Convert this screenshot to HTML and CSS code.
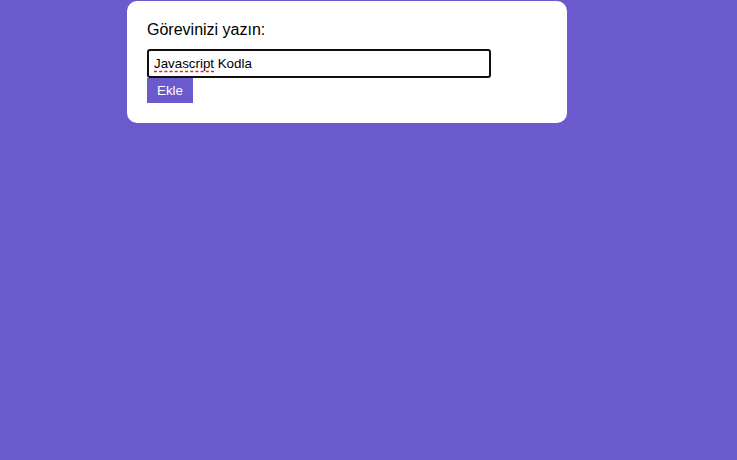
FILE: index.html
```html
<!DOCTYPE html>
<html lang="tr">
<head>
<meta charset="utf-8">
<title>Görevler</title>
<link rel="stylesheet" href="styles.css">
</head>
<body>
<div class="card">
  <label class="label" for="task">Görevinizi yazın:</label>
  <div class="field" id="task"><span class="misspelled">Javascript</span> Kodla</div>
  <button class="add-btn" type="button">Ekle</button>
</div>
</body>
</html>
```
FILE: styles.css
```css
html, body {
  margin: 0;
  padding: 0;
  background: #6a5acd;
  height: 100%;
}
body {
  font-family: "Liberation Sans", Arial, sans-serif;
  padding-top: 1px;
  box-sizing: border-box;
}
.card {
  width: 440px;
  box-sizing: border-box;
  margin-left: 127px;
  background: #fff;
  border-radius: 10px;
  padding: 20px;
  display: flex;
  flex-direction: column;
  align-items: flex-start;
}
.label {
  font-size: 16px;
  line-height: 18px;
  color: #000;
  margin-bottom: 10px;
}
.field {
  width: 344px;
  height: 29px;
  box-sizing: border-box;
  border: 2px solid #101010;
  border-radius: 3px;
  padding: 0 5px;
  font-size: 13.33px;
  line-height: 25px;
  color: #000;
}
.misspelled {
  text-decoration: underline dashed #e02020;
  text-underline-offset: 3px;
}
.add-btn {
  background: #6a5acd;
  color: #fff;
  border: none;
  font-family: "Liberation Sans", Arial, sans-serif;
  font-size: 13.33px;
  height: 25px;
  width: 46px;
  padding: 0;
  cursor: pointer;
}
```
